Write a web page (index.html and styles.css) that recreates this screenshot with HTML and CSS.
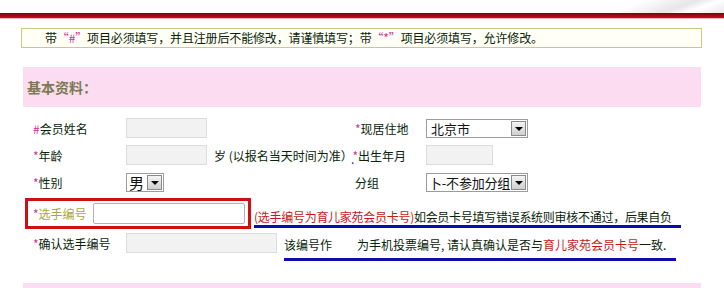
FILE: index.html
```html
<!DOCTYPE html>
<html lang="zh-CN">
  <head>
    <meta charset="UTF-8" />
    <title>会员注册</title>
    <link rel="stylesheet" href="styles.css">
  </head>
  <body>
    <div class="top">
      <div class="top-bar"></div>
    </div>
    <div class="notice">
      带<span class="mark">“#”</span>项目必须填写，并且注册后不能修改，请谨慎填写；带<span class="mark">“*”</span>项目必须填写，允许修改。
    </div>

    <div class="section">基本资料：</div>

    <div class="form-grid">
      <div class="label"><span class="mark">#</span>会员姓名</div>
      <div class="cell"><span class="txt"></span></div>
      <div class="label"><span class="mark">*</span>现居住地</div>
      <div class="cell">
        <span class="sel sel-wide"><span class="sel-text">北京市</span><span class="arrow"></span></span>
      </div>

      <div class="label"><span class="mark">*</span>年龄</div>
      <div class="cell"><span class="txt"></span><span class="hint">岁 (以报名当天时间为准）</span></div>
      <div class="label"><span class="dot">.</span><span class="mark">*</span>出生年月</div>
      <div class="cell"><span class="txt txt-short"></span></div>

      <div class="label"><span class="mark">*</span>性别</div>
      <div class="cell">
        <span class="sel"><span class="sel-text big">男</span><span class="arrow"></span></span>
      </div>
      <div class="label">分组</div>
      <div class="cell">
        <span class="sel sel-wide"><span class="sel-text tight">卜-不参加分组</span><span class="arrow"></span></span>
      </div>
    </div>

    <div class="row row-id">
      <div class="id-box">
        <span class="label-id"><span class="mark">*</span>选手编号</span>
        <span class="txt txt-id"></span>
      </div>
      <span class="uline uline-1"><span class="red">(选手编号为育儿家苑会员卡号)</span>如会员卡号填写错误系统则审核不通过，后果自负</span>
    </div>

    <div class="row row-confirm">
      <span class="label label-confirm"><span class="mark">*</span>确认选手编号</span>
      <span class="txt txt-confirm"></span>
      <span class="uline uline-2">该编号作<span class="gap"></span>为手机投票编号, 请认真确认是否与<span class="red">育儿家苑会员卡号</span>一致.</span>
    </div>

    <div class="section section-next"></div>
  </body>
</html>
```

FILE: styles.css
```css
body {
  margin: 0;
  font-family: "Noto Sans CJK SC", "Liberation Sans", sans-serif;
  font-size: 12px;
  color: #082408;
  background: #fff;
  overflow: hidden;
}
.top {
  height: 13px;
  position: relative;
  background: linear-gradient(160deg, #fff 85%, #e6e6e6 92%, #fff 95%, #e9e9e9 100%);
}
.top-bar {
  position: absolute;
  left: 0;
  right: 0;
  top: 13px;
  height: 5px;
  background: linear-gradient(#7e0010, #b3081a 70%, #c8102a);
  border-bottom: 1px solid #f2b6bf;
}
.notice {
  margin: 15px 22px 0 21px;
  height: 18px;
  line-height: 18px;
  border: 1px solid #c9c98a;
  background: #fffff6;
  padding-left: 23px;
  white-space: nowrap;
  letter-spacing: -0.15px;
}
.mark {
  color: #cc3399;
}
.section {
  margin: 19px 23px 0 23px;
  height: 40px;
  line-height: 40px;
  background: #fcdcf0;
  padding-left: 4px;
  font-size: 14px;
  font-weight: bold;
  color: #7a7a52;
}
.form-grid {
  display: grid;
  grid-template-columns: 93px 229px 71px auto;
  grid-auto-rows: 20px;
  row-gap: 7px;
  padding-left: 33px;
  margin-top: 11px;
  align-items: center;
}
.label {
  white-space: nowrap;
}
.cell {
  display: flex;
  align-items: center;
}
.txt {
  display: inline-block;
  box-sizing: border-box;
  width: 81px;
  height: 20px;
  background: #f2f2f2;
  border: 1px solid #dcdcdc;
}
.txt-short {
  width: 67px;
}
.hint {
  margin-left: 7px;
  white-space: nowrap;
}
.dot {
  color: #1a1a99;
  margin-left: -4px;
  font-size: 12px;
  position: relative;
  top: 3px;
}
.sel {
  display: inline-flex;
  align-items: center;
  box-sizing: border-box;
  height: 19px;
  border: 1px solid #9c9c9c;
  background: #fff;
  padding: 1px;
}
.sel-wide {
  width: 102px;
  justify-content: space-between;
}
.sel-text {
  padding-left: 3px;
  font-size: 13px;
  line-height: 15px;
  color: #111;
  white-space: nowrap;
}
.sel-text.tight {
  padding-left: 1px;
  letter-spacing: -0.2px;
}
.sel-text.big {
  font-size: 15px;
  padding-left: 1px;
  padding-right: 3px;
}
.arrow {
  flex: none;
  box-sizing: border-box;
  width: 15px;
  height: 15px;
  border: 1px solid #8a8a8a;
  background: linear-gradient(#f4f4f4, #cfcfcf);
  position: relative;
}
.arrow::after {
  content: "";
  position: absolute;
  left: 3px;
  top: 5px;
  border-left: 4px solid transparent;
  border-right: 4px solid transparent;
  border-top: 4px solid #000;
}
.row {
  display: flex;
  align-items: center;
  white-space: nowrap;
}
.row-id {
  margin-top: 6px;
  padding-left: 25px;
}
.id-box {
  display: flex;
  align-items: center;
  box-sizing: border-box;
  width: 226px;
  height: 31px;
  border: 3px solid #cc1111;
  padding-left: 5px;
}
.label-id {
  width: 60px;
  color: #a9a938;
}
.txt-id {
  width: 152px;
  height: 21px;
  background: #fff;
  border: 1px solid #b4b4b4;
  border-radius: 2px;
}
.uline {
  display: inline-block;
  border-bottom: 3px solid #0b0bb0;
  line-height: 17px;
}
.uline-1 {
  width: 427px;
  margin-left: 3px;
  position: relative;
  top: 4px;
  letter-spacing: -0.28px;
}
.red {
  color: #c41a1a;
}
.row-confirm {
  margin-top: 4px;
  padding-left: 33px;
  height: 20px;
}
.label-confirm {
  width: 93px;
}
.txt-confirm {
  width: 151px;
  height: 20px;
}
.uline-2 {
  width: 392px;
  margin-left: 7px;
  position: relative;
  top: 5px;
  padding-bottom: 5px;
}
.gap {
  display: inline-block;
  width: 25px;
}
.section-next {
  margin-top: 30px;
  height: 5px;
}
```
